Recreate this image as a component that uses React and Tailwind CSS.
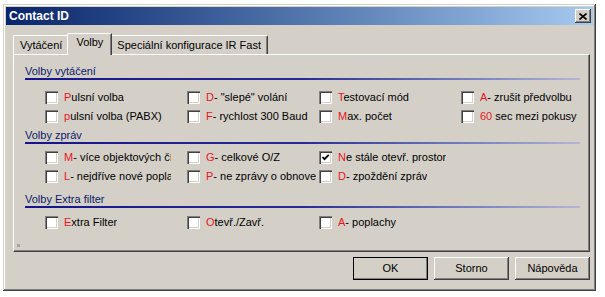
import React from "react";

const widths = ["w-[142px] shrink-0", "w-[132px] shrink-0", "w-[142px] shrink-0", "shrink-0"];
const clips = ["max-w-[107px]", "max-w-[110px]", "max-w-[123px]", ""];

const sections = [
  {
    title: "Volby vytáčení",
    head: "mt-[10px]",
    body: "mt-[8px]",
    rows: [
      [["P", "ulsní volba"], ["D", "- \"slepé\" volání"], ["T", "estovací mód"], ["A", "- zrušit předvolbu"]],
      [["p", "ulsní volba (PABX)"], ["F", "- rychlost 300 Baud"], ["M", "ax. počet"], ["60", " sec mezi pokusy"]],
    ],
  },
  {
    title: "Volby zpráv",
    head: "mt-[3px]",
    body: "mt-[4px]",
    rows: [
      [["M", "- více objektových čísel"], ["G", "- celkové O/Z"], ["N", "e stále otevř. prostor", true]],
      [["L", "- nejdříve nové poplachy"], ["P", "- ne zprávy o obnovení"], ["D", "- zpoždění zpráv"]],
    ],
  },
  {
    title: "Volby Extra filter",
    head: "mt-[7px]",
    body: "mt-[5px]",
    rows: [[["E", "xtra Filter"], ["O", "tevř./Zavř."], ["A", "- poplachy"]]],
  },
];

const raised =
  "shadow-[inset_-1px_-1px_#404040,inset_1px_1px_#fff,inset_-2px_-2px_#808080,inset_2px_2px_#d4d0c8]";

const Check = ({ on }) => (
  <div className="w-[13px] h-[13px] shrink-0 bg-white flex items-center justify-center shadow-[inset_1px_1px_#808080,inset_2px_2px_#404040,inset_-1px_-1px_#fff,inset_-2px_-2px_#d4d0c8]">
    {on && (
      <svg width="9" height="9" viewBox="0 0 9 9">
        <path d="M1.5 4 L3.5 6.2 L7.8 1.8" fill="none" stroke="#000" strokeWidth="1.8" />
      </svg>
    )}
  </div>
);

const Button = ({ children, isDefault }) => (
  <div
    className={`w-[75px] h-[23px] flex items-center justify-center bg-[#d4d0c8] ${raised} ${
      isDefault ? "outline outline-1 outline-black -outline-offset-1" : ""
    }`}
  >
    {children}
  </div>
);

export default function App() {
  return (
    <div className="w-[605px] h-[297px] bg-white pl-[3px] pt-[4px] font-['Liberation_Sans',Arial,sans-serif] text-[11px] text-black">
      <div className="w-[593px] h-[287px] bg-[#d4d0c8] p-[3px] flex flex-col shadow-[inset_-1px_-1px_#404040,inset_1px_1px_#d4d0c8,inset_-2px_-2px_#808080,inset_2px_2px_#fff]">
        {/* title bar */}
        <div className="h-[18px] flex items-center justify-between pl-[3px] pr-[2px] bg-gradient-to-r from-[#0a246a] to-[#a6caf0]">
          <span className="text-white font-bold text-[12px] leading-none">Contact ID</span>
          <div className={`w-[16px] h-[14px] bg-[#d4d0c8] flex items-center justify-center ${raised}`}>
            <svg width="8" height="7" viewBox="0 0 8 7">
              <path d="M0.5 0.5 L7.5 6.5 M7.5 0.5 L0.5 6.5" stroke="#000" strokeWidth="1.6" />
            </svg>
          </div>
        </div>

        <div className="ml-[7px] mr-[3px] mt-[8px]">
          {/* tabs */}
          <div className="flex items-end h-[21px]">
            <div className="h-[19px] pt-[3px] px-[6px] leading-[13px] border-l border-t border-white border-r border-r-[#404040] rounded-tl-[2px]">
              Vytáčení
            </div>
            <div className="relative z-10 -mx-[2px] -mb-[1px] h-[22px] pt-[2px] px-[8px] leading-[13px] bg-[#d4d0c8] border-l border-t border-white border-r border-r-[#404040] rounded-tl-[2px] shadow-[inset_-1px_0_#808080]">
              Volby
            </div>
            <div className="h-[19px] pt-[3px] px-[6px] leading-[13px] border-l border-t border-white border-r border-r-[#404040] rounded-tr-[2px] shadow-[inset_-1px_0_#808080]">
              Speciální konfigurace IR Fast
            </div>
          </div>

          {/* panel */}
          <div className="relative h-[198px] overflow-hidden border-l border-t border-white border-r border-b border-r-[#404040] border-b-[#404040] shadow-[inset_-1px_-1px_#808080]">
            {sections.map((s) => (
              <div key={s.title}>
                <div className={`${s.head} ml-[11px] mr-[9px]`}>
                  <div className="leading-[13px] text-[#0a1a6a]">{s.title}</div>
                  <div className="h-[2px] bg-gradient-to-r from-[#14148c] via-[#2a2a96] to-[#b4b4d4]" />
                </div>
                <div className={s.body}>
                  {s.rows.map((row, ri) => (
                    <div key={ri} className="flex h-[19px] items-center pl-[31px]">
                      {row.map(([red, rest, on], ci) => (
                        <div key={ci} className={`flex items-center ${widths[ci]}`}>
                          <Check on={on} />
                          <span className={`ml-[6px] overflow-hidden whitespace-nowrap leading-[13px] ${clips[ci]}`}>
                            <span className="text-[#e8141c]">{red}</span>
                            {rest}
                          </span>
                        </div>
                      ))}
                    </div>
                  ))}
                </div>
              </div>
            ))}
            <div className="absolute left-[3px] bottom-[4px] w-[3px] h-[3px] bg-[#a8a49c]" />
          </div>
        </div>

        {/* buttons */}
        <div className="flex justify-end gap-[6px] mr-[3px] mt-[5px]">
          <Button isDefault>OK</Button>
          <Button>Storno</Button>
          <Button>Nápověda</Button>
        </div>
      </div>
    </div>
  );
}
